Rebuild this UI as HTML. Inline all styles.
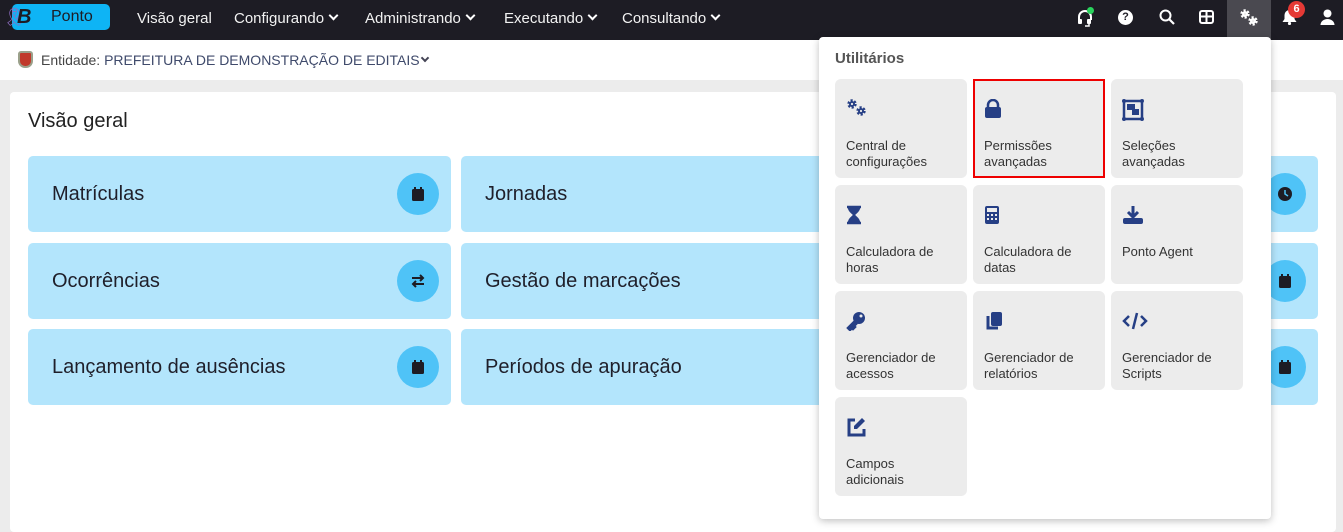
<!DOCTYPE html>
<html><head><meta charset="utf-8"><style>
*{box-sizing:border-box;margin:0;padding:0}
body{width:1343px;height:525px;overflow:hidden;background:#ececec;font-family:"Liberation Sans","DejaVu Sans",sans-serif;position:relative}
.nav{position:absolute;left:0;top:0;width:1343px;height:40px;background:#1d1c24;color:#fff}
.nav .it{position:absolute;top:10px;font-size:15px;color:#f2f2f2}
.chev{display:inline-block;width:7px;height:7px;border-right:2px solid #fff;border-bottom:2px solid #fff;transform:rotate(45deg);margin-left:6px;position:relative;top:-4px}
.ent{position:absolute;left:0;top:40px;width:1343px;height:40px;background:#fff}
.card{position:absolute;left:10px;top:92px;width:1326px;height:440px;background:#fff;border-radius:4px}
.tile{position:absolute;width:423px;height:76px;background:#b3e5fc;border-radius:5px;font-size:20px;color:#1f1f2a}
.tile span{position:absolute;left:24px;top:27px}
.circ{position:absolute;right:12px;top:17px;width:42px;height:42px;border-radius:50%;background:#4fc3f7}
.circ svg{position:absolute;left:13px;top:13px}
.dd{position:absolute;left:819px;top:37px;width:452px;height:482px;background:#fff;border-radius:4px;box-shadow:0 2px 8px rgba(0,0,0,.25)}
.ut{position:absolute;left:16px;top:13px;font-size:15px;font-weight:bold;color:#555}
.u{position:absolute;width:132px;height:99px;background:#ececec;border-radius:6px;font-size:13px;color:#333;line-height:16px}
.u .t{position:absolute;left:11px;top:59px}
.u svg{position:absolute;left:11px;top:20px}
</style></head><body>
<svg width="0" height="0" style="position:absolute"><defs>
<g id="gear"><circle r="3.2" fill="none" stroke="currentColor" stroke-width="3" stroke-dasharray="1.9 1.45"/><circle r="3" fill="currentColor"/><circle r="1.1" fill="#ececec"/></g>
</defs></svg>
<div class="nav">
 <div style="position:absolute;left:12px;top:4px;width:98px;height:26px;background:#0eb4f5;border-radius:5px"></div>
 <div style="position:absolute;left:3px;top:7px;font-size:18px;color:#8e6cc0">&#x1F397;</div>
 <div style="position:absolute;left:17px;top:6px;font-size:20px;font-weight:bold;font-style:italic;color:#1d1c24">B</div>
 <div style="position:absolute;left:51px;top:8px;font-size:16px;color:#1d1c24">Ponto</div>
 <div class="it" style="left:137px">Visão geral</div>
 <div class="it" style="left:234px">Configurando<i class="chev"></i></div>
 <div class="it" style="left:365px">Administrando<i class="chev"></i></div>
 <div class="it" style="left:504px">Executando<i class="chev"></i></div>
 <div class="it" style="left:622px">Consultando<i class="chev"></i></div>
 <svg style="position:absolute;left:1076px;top:9px" width="18" height="18" viewBox="0 0 18 18"><path d="M3 11V8a6 6 0 0 1 12 0v3" fill="none" stroke="#fff" stroke-width="2"/><rect x="2" y="10" width="4" height="5" rx="1" fill="#fff"/><rect x="11" y="10" width="4" height="5" rx="1" fill="#fff"/><path d="M13 15v2H9" stroke="#fff" stroke-width="1.5" fill="none"/></svg>
 <div style="position:absolute;left:1087px;top:7px;width:7px;height:7px;border-radius:50%;background:#29d35c"></div>
 <div style="position:absolute;left:1118px;top:10px;width:15px;height:15px;border-radius:50%;background:#fff;color:#1d1c24;font-size:11px;font-weight:bold;text-align:center;line-height:15px">?</div>
 <svg style="position:absolute;left:1159px;top:9px" width="16" height="16" viewBox="0 0 16 16"><circle cx="6.5" cy="6.5" r="5" fill="none" stroke="#fff" stroke-width="2"/><path d="M10 10l5 5" stroke="#fff" stroke-width="2.2"/></svg>
 <svg style="position:absolute;left:1199px;top:10px" width="15" height="14" viewBox="0 0 15 14"><rect x="1" y="1" width="13" height="12" rx="2" fill="none" stroke="#fff" stroke-width="2"/><path d="M7.5 1v12M1 6.5h13" stroke="#fff" stroke-width="2"/></svg>
 <div style="position:absolute;left:1227px;top:0;width:44px;height:40px;background:#4a4950"></div>
 <svg style="position:absolute;left:1239px;top:9px;color:#fff" width="22" height="18" viewBox="0 0 22 18"><use href="#gear" x="6" y="5" style="--c:#fff"/><use href="#gear" x="14" y="12"/></svg>
 <svg style="position:absolute;left:1282px;top:9px" width="15" height="16" viewBox="0 0 15 16"><path d="M7.5 1a5 5 0 0 1 5 5v4l2 3H0.5l2-3V6a5 5 0 0 1 5-5z" fill="#fff"/><circle cx="7.5" cy="14.5" r="1.6" fill="#fff"/></svg>
 <div style="position:absolute;left:1288px;top:1px;width:17px;height:17px;border-radius:50%;background:#e53935;color:#fff;font-size:11px;font-weight:bold;text-align:center;line-height:17px">6</div>
 <svg style="position:absolute;left:1320px;top:9px" width="15" height="16" viewBox="0 0 15 16"><circle cx="7.5" cy="4.5" r="4" fill="#fff"/><path d="M0.5 16a7 6 0 0 1 14 0z" fill="#fff"/></svg>
</div>
<div class="ent">
 <div style="position:absolute;left:18px;top:11px;width:15px;height:17px;border-radius:3px 3px 7px 7px;background:#c0392b;border:2px solid #9aa08a"></div>
 <div style="position:absolute;left:41px;top:12px;font-size:14px;color:#444">Entidade: <span style="color:#3f4a6b">PREFEITURA DE DEMONSTRAÇÃO DE EDITAIS</span><i class="chev" style="border-color:#445;width:6px;height:6px;margin-left:2px"></i></div>
</div>
<div class="card">
 <div style="position:absolute;left:18px;top:18px;font-size:20px;color:#222">Visão geral</div>
</div>
<div class="tile" style="left:28px;top:156px"><span>Matrículas</span><div class="circ"><svg width="16" height="16" viewBox="0 0 16 16"><rect x="2" y="3" width="12" height="12" rx="1.5" fill="#1d1c24"/><rect x="4" y="1" width="2" height="3" fill="#1d1c24"/><rect x="10" y="1" width="2" height="3" fill="#1d1c24"/></svg></div></div>
<div class="tile" style="left:28px;top:243px"><span>Ocorrências</span><div class="circ"><svg width="16" height="16" viewBox="0 0 16 16"><path d="M2 5h11M10 2l3 3-3 3M14 11H3M6 8l-3 3 3 3" fill="none" stroke="#1d1c24" stroke-width="2"/></svg></div></div>
<div class="tile" style="left:28px;top:329px"><span>Lançamento de ausências</span><div class="circ"><svg width="16" height="16" viewBox="0 0 16 16"><rect x="2" y="3" width="12" height="12" rx="1.5" fill="#1d1c24"/><rect x="4" y="1" width="2" height="3" fill="#1d1c24"/><rect x="10" y="1" width="2" height="3" fill="#1d1c24"/></svg></div></div>
<div class="tile" style="left:461px;top:156px"><span>Jornadas</span></div>
<div class="tile" style="left:461px;top:243px"><span>Gestão de marcações</span></div>
<div class="tile" style="left:461px;top:329px"><span>Períodos de apuração</span></div>
<div class="tile" style="left:895px;top:156px"><div class="circ"><svg width="16" height="16" viewBox="0 0 16 16"><circle cx="8" cy="8" r="7" fill="#1d1c24"/><path d="M8 4v4l3 2" stroke="#4fc3f7" stroke-width="1.5" fill="none"/></svg></div></div>
<div class="tile" style="left:895px;top:243px"><div class="circ"><svg width="16" height="16" viewBox="0 0 16 16"><rect x="2" y="3" width="12" height="12" rx="1.5" fill="#1d1c24"/><rect x="4" y="1" width="2" height="3" fill="#1d1c24"/><rect x="10" y="1" width="2" height="3" fill="#1d1c24"/></svg></div></div>
<div class="tile" style="left:895px;top:329px"><div class="circ"><svg width="16" height="16" viewBox="0 0 16 16"><rect x="2" y="3" width="12" height="12" rx="1.5" fill="#1d1c24"/><rect x="4" y="1" width="2" height="3" fill="#1d1c24"/><rect x="10" y="1" width="2" height="3" fill="#1d1c24"/></svg></div></div>
<div class="dd">
 <div class="ut">Utilitários</div>
 <div class="u" style="left:16px;top:42px"><svg style="color:#263f85" width="26" height="20" viewBox="0 0 26 20"><use href="#gear" x="6" y="5"/><use href="#gear" x="15" y="12"/></svg><div class="t">Central de<br>configurações</div></div>
 <div class="u" style="left:154px;top:42px;border:2px solid #e00;border-radius:0"><svg style="left:9px;top:18px" width="18" height="20" viewBox="0 0 18 20"><path d="M4 9V6a5 5 0 0 1 10 0v3" fill="none" stroke="#263f85" stroke-width="2.5"/><rect x="1" y="8" width="16" height="11" rx="2" fill="#263f85"/></svg><div class="t" style="left:9px;top:57px">Permissões<br>avançadas</div></div>
 <div class="u" style="left:292px;top:42px"><svg width="22" height="22" viewBox="0 0 22 22"><rect x="2" y="2" width="18" height="18" fill="none" stroke="#263f85" stroke-width="2.5"/><rect x="5" y="5" width="8" height="6" fill="#263f85"/><rect x="10" y="10" width="7" height="6" fill="#263f85"/><circle cx="2" cy="2" r="2" fill="#263f85"/><circle cx="20" cy="2" r="2" fill="#263f85"/><circle cx="2" cy="20" r="2" fill="#263f85"/><circle cx="20" cy="20" r="2" fill="#263f85"/></svg><div class="t">Seleções<br>avançadas</div></div>
 <div class="u" style="left:16px;top:148px"><svg width="16" height="20" viewBox="0 0 16 20"><path d="M1 2h14M1 18h14M3 2c0 5 5 6 5 8s-5 3-5 8h10c0-5-5-6-5-8s5-3 5-8" fill="#263f85" stroke="#263f85" stroke-width="2.5"/></svg><div class="t">Calculadora de<br>horas</div></div>
 <div class="u" style="left:154px;top:148px"><svg width="16" height="20" viewBox="0 0 16 20"><rect x="1" y="1" width="14" height="18" rx="2" fill="#263f85"/><rect x="3" y="3" width="10" height="4" fill="#ececec"/><g fill="#ececec"><rect x="3" y="9" width="2" height="2"/><rect x="7" y="9" width="2" height="2"/><rect x="11" y="9" width="2" height="2"/><rect x="3" y="13" width="2" height="2"/><rect x="7" y="13" width="2" height="2"/><rect x="11" y="13" width="2" height="2"/></g></svg><div class="t">Calculadora de<br>datas</div></div>
 <div class="u" style="left:292px;top:148px"><svg width="22" height="20" viewBox="0 0 22 20"><path d="M11 1v10M6 7l5 5 5-5" fill="none" stroke="#263f85" stroke-width="3"/><rect x="1" y="13" width="20" height="6" rx="2" fill="#263f85"/></svg><div class="t">Ponto Agent</div></div>
 <div class="u" style="left:16px;top:254px"><svg width="20" height="20" viewBox="0 0 20 20"><circle cx="13" cy="7" r="6" fill="#263f85"/><path d="M9 10L2 17l2 2 2-2 1 1 2-2-1-1 3-3" fill="#263f85" stroke="#263f85" stroke-width="2.5"/><circle cx="15" cy="5" r="1.5" fill="#ececec"/></svg><div class="t">Gerenciador de<br>acessos</div></div>
 <div class="u" style="left:154px;top:254px"><svg width="20" height="20" viewBox="0 0 20 20"><rect x="7" y="1" width="11" height="14" rx="2" fill="#263f85"/><path d="M4 5v12h10" fill="none" stroke="#263f85" stroke-width="3"/></svg><div class="t">Gerenciador de<br>relatórios</div></div>
 <div class="u" style="left:292px;top:254px"><svg width="26" height="20" viewBox="0 0 26 20"><path d="M7 5L2 10l5 5M19 5l5 5-5 5M15 2l-4 16" fill="none" stroke="#263f85" stroke-width="2.5"/></svg><div class="t">Gerenciador de<br>Scripts</div></div>
 <div class="u" style="left:16px;top:360px"><svg width="20" height="20" viewBox="0 0 20 20"><path d="M9 3H3v15h15v-6" fill="none" stroke="#263f85" stroke-width="3"/><path d="M16 1l3 3-8 8H8V9z" fill="#263f85"/></svg><div class="t">Campos<br>adicionais</div></div>
</div>
</body></html>
